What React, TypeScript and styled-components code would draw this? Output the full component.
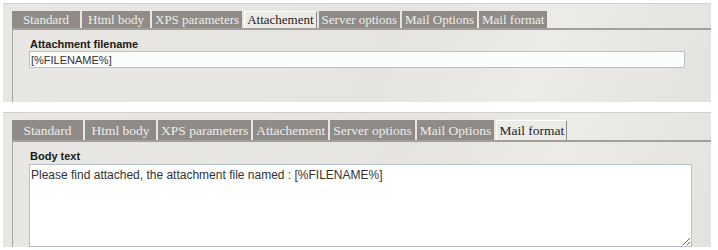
import styled, { createGlobalStyle } from "styled-components";

const GlobalStyle = createGlobalStyle`
  html, body {
    margin: 0;
    padding: 0;
    background: #ffffff;
  }
`;

const Page = styled.div`
  width: 718px;
  padding: 3px 7px 0 3px;
  box-sizing: border-box;
  display: flex;
  flex-direction: column;
  gap: 10px;
`;

const Panel = styled.div<{ $height: number; $top: number }>`
  height: ${(p) => p.$height}px;
  box-sizing: border-box;
  padding-top: ${(p) => p.$top}px;
  padding-left: 9px;
  background: linear-gradient(115deg, #e9e7e4 0%, #e6e4e1 55%, #ecebe8 75%, #e4e2df 100%);
  border-top: 1px solid #d3d0cc;
  display: flex;
  flex-direction: column;
`;

const TabBar = styled.div`
  display: flex;
  gap: 2px;
  border-bottom: 2px solid #a3a09c;
`;

const Tab = styled.div<{ $active?: boolean; $big?: boolean }>`
  flex-shrink: 0;
  height: ${(p) => (p.$big ? 20 : 17)}px;
  min-width: ${(p) => (p.$big ? 71 : 68)}px;
  padding: 0 2px;
  box-sizing: border-box;
  display: flex;
  align-items: center;
  justify-content: center;
  font-family: "Liberation Serif", "Times New Roman", serif;
  font-size: ${(p) => (p.$big ? 13.5 : 13)}px;
  white-space: nowrap;
  color: ${(p) => (p.$active ? "#1e1e1e" : "#eeedeb")};
  background: ${(p) => (p.$active ? "#ecebe8" : "#8f8c88")};
  border: 1px solid #8f8c88;
  border-left-color: ${(p) => (p.$active ? "#ffffff" : "#8f8c88")};
  border-top-color: ${(p) => (p.$active ? "#ffffff" : "#8f8c88")};
  border-bottom: none;
`;

const Body = styled.div`
  flex: 1;
  border-left: 1px solid #a8a5a1;
  padding: 8px 0 0 16px;
  display: flex;
  flex-direction: column;
`;

const Label = styled.div`
  font-family: "Liberation Sans", Arial, sans-serif;
  font-size: 11px;
  font-weight: bold;
  color: #1a1a1a;
  line-height: 13px;
  padding-left: 1px;
`;

const TextInput = styled.input`
  width: 656px;
  height: 17px;
  box-sizing: border-box;
  margin: 0;
  padding: 0 1px;
  border: 1px solid #b5c3c7;
  background: #fbfdfd;
  font-family: "Liberation Sans", Tahoma, sans-serif;
  font-size: 11px;
  color: #333333;
  outline: none;
`;

const TextArea = styled.textarea`
  width: 663px;
  height: 83px;
  box-sizing: border-box;
  margin: 1px 0 0 0;
  padding: 3px 1px;
  border: 1px solid #b5c3c7;
  background: #ffffff;
  font-family: "Liberation Sans", Tahoma, sans-serif;
  font-size: 12px;
  color: #333333;
  outline: none;
`;

const tabs = [
  "Standard",
  "Html body",
  "XPS parameters",
  "Attachement",
  "Server options",
  "Mail Options",
  "Mail format",
];

const Tabs = ({ active, big }: { active: string; big?: boolean }) => (
  <TabBar>
    {tabs.map((t) => (
      <Tab key={t} $active={t === active} $big={big}>
        {t}
      </Tab>
    ))}
  </TabBar>
);

export default function App() {
  return (
    <>
      <GlobalStyle />
      <Page>
        <Panel $height={99} $top={7}>
          <Tabs active="Attachement" />
          <Body>
            <Label>Attachment filename</Label>
            <TextInput defaultValue="[%FILENAME%]" readOnly />
          </Body>
        </Panel>
        <Panel $height={135} $top={7}>
          <Tabs active="Mail format" big />
          <Body>
            <Label>Body text</Label>
            <TextArea defaultValue="Please find attached, the attachment file named : [%FILENAME%]" />
          </Body>
        </Panel>
      </Page>
    </>
  );
}
